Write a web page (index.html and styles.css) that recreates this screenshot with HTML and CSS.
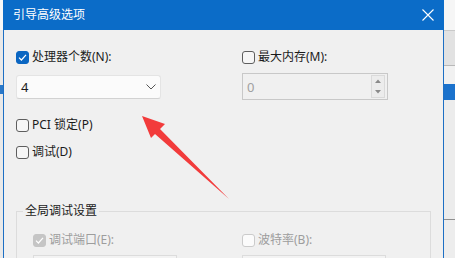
FILE: index.html
```html
<!DOCTYPE html>
<html lang="zh-CN">
<head>
    <meta charset="UTF-8">
    <title>引导高级选项</title>
    <link rel="stylesheet" href="styles.css">
</head>
<body>
    <div class="desk desk-left">
        <div class="desk-top"></div>
        <span class="chev"></span>
    </div>

    <div class="dialog">
        <div class="titlebar">
            <span class="title">引导高级选项</span>
            <svg class="close" width="12" height="12" viewBox="0 0 12 12">
                <path d="M0.5 0.5 L11.5 11.5 M11.5 0.5 L0.5 11.5" stroke="#fff" stroke-width="1.1" fill="none"/>
            </svg>
        </div>

        <div class="content">
            <div class="grid">
                <div class="col">
                    <label class="check">
                        <span class="box checked">
                            <svg width="9" height="9" viewBox="0 0 9 9"><path d="M1 4.6 L3.4 7 L8 1.8" stroke="#fff" stroke-width="1.2" fill="none"/></svg>
                        </span>
                        处理器个数(N):
                    </label>
                    <div class="select">
                        <span>4</span>
                        <svg width="10" height="6" viewBox="0 0 10 6"><path d="M0.5 0.5 L5 5 L9.5 0.5" stroke="#555" stroke-width="1" fill="none"/></svg>
                    </div>
                </div>
                <div class="col">
                    <label class="check">
                        <span class="box"></span>
                        最大内存(M):
                    </label>
                    <div class="spin">
                        <span>0</span>
                        <div class="spin-btns">
                            <svg width="6" height="4" viewBox="0 0 6 4"><path d="M0 4 L3 0.5 L6 4 Z" fill="#8a8a8a"/></svg>
                            <svg width="6" height="4" viewBox="0 0 6 4"><path d="M0 0 L3 3.5 L6 0 Z" fill="#8a8a8a"/></svg>
                        </div>
                    </div>
                </div>
            </div>

            <label class="check pci">
                <span class="box"></span>
                PCI 锁定(P)
            </label>
            <label class="check debug">
                <span class="box"></span>
                调试(D)
            </label>

            <fieldset class="group">
                <legend>全局调试设置</legend>
                <div class="group-grid">
                    <div class="col">
                        <label class="check disabled">
                            <span class="box checked">
                                <svg width="9" height="9" viewBox="0 0 9 9"><path d="M1 4.6 L3.4 7 L8 1.8" stroke="#fff" stroke-width="1.2" fill="none"/></svg>
                            </span>
                            调试端口(E):
                        </label>
                        <div class="field"></div>
                    </div>
                    <div class="col">
                        <label class="check disabled">
                            <span class="box"></span>
                            波特率(B):
                        </label>
                        <div class="field"></div>
                    </div>
                </div>
            </fieldset>
        </div>
    </div>

    <div class="desk desk-right">
        <div class="strip s1"></div>
        <div class="strip s2"></div>
        <div class="strip s3"></div>
        <div class="strip s4"></div>
        <div class="strip s5"></div>
    </div>

    <!-- red pointer drawn over the dialog -->
    <svg class="arrow" width="100" height="100" viewBox="135 110 100 100">
        <polygon points="142,116 165,124 160,129 229,199 155,134 151,138" fill="#f23b3b"/>
    </svg>
</body>
</html>
```

FILE: styles.css
```css
* {
    margin: 0;
    padding: 0;
    box-sizing: border-box;
}

body {
    width: 455px;
    height: 258px;
    overflow: hidden;
    display: flex;
    font-family: "Noto Sans", "Noto Sans CJK SC", sans-serif;
    font-size: 12px;
    color: #1b1b1b;
    background: #ececec;
}

/* background window peeking out on both sides */
.desk {
    height: 258px;
    flex-shrink: 0;
}

.desk-left {
    width: 3px;
    background: #e9e9e9;
    display: flex;
    flex-direction: column;
}

.desk-top {
    height: 30px;
    background: #f8f8f8;
}

.chev {
    display: block;
    width: 3px;
    height: 9px;
    margin-top: 55px;
    background: #2a78c8;
}

.desk-right {
    width: 11px;
    display: flex;
    flex-direction: column;
    background: #ededed;
}

.strip.s1 { height: 31px; background: #f6f6f6; border-bottom: 1px solid #c9c9c9; }
.strip.s2 { height: 35px; background: #e2e2e2; border-bottom: 1px solid #b8b8b8; }
.strip.s3 { height: 18px; background: #f1f1f1; }
.strip.s4 { height: 16px; background: #1b72cc; }
.strip.s5 { height: 120px; background: #ececec; border-bottom: 1px solid #8f8f8f; }

/* dialog */
.dialog {
    width: 441px;
    flex-shrink: 0;
    background: #f0f0f0;
    border-left: 1px solid #1d6fc4;
    border-right: 1px solid #1d6fc4;
}

.titlebar {
    height: 30px;
    margin: 0 -1px;
    background: #0b6cc8;
    display: flex;
    align-items: center;
    justify-content: space-between;
    padding: 0 10px 0 10px;
}

.title {
    color: #fff;
    font-size: 12px;
    line-height: 14px;
}

.close {
    display: block;
    margin-right: 0;
}

.content {
    padding: 20px 0 0 12px;
}

.grid {
    display: grid;
    grid-template-columns: 226px 1fr;
}

.col {
    display: flex;
    flex-direction: column;
    align-items: flex-start;
}

.check {
    display: flex;
    align-items: center;
    gap: 3px;
    height: 14px;
    line-height: 14px;
    white-space: nowrap;
}

.box {
    width: 13px;
    height: 13px;
    border: 1px solid #5e5e5e;
    border-radius: 3px;
    background: #f6f6f6;
    display: flex;
    align-items: center;
    justify-content: center;
    flex-shrink: 0;
}

.box.checked {
    background: #0b66c2;
    border-color: #0b66c2;
}

.box svg {
    display: block;
}

.check.disabled {
    color: #9d9d9d;
}

.check.disabled .box {
    border-color: #cbcbcb;
    background: #fbfbfb;
}

.check.disabled .box.checked {
    background: #c5c5c5;
    border-color: #c5c5c5;
}

.select {
    margin-top: 11px;
    width: 145px;
    height: 24px;
    background: #fbfbfb;
    border: 1px solid #e4e4e4;
    border-bottom-color: #d2d2d2;
    border-radius: 3px;
    display: flex;
    align-items: center;
    justify-content: space-between;
    padding: 0 4px 0 4px;
    font-size: 13px;
}

.spin {
    margin-top: 9px;
    width: 146px;
    height: 27px;
    border: 1px solid #c8c8c8;
    background: #f0f0f0;
    display: flex;
    align-items: center;
    justify-content: space-between;
    padding: 0 2px 0 4px;
    color: #a0a0a0;
    font-size: 13px;
}

.spin-btns {
    width: 14px;
    height: 23px;
    border: 1px solid #dadada;
    background: #ececec;
    display: flex;
    flex-direction: column;
    align-items: center;
    justify-content: space-around;
}

.spin-btns svg {
    display: block;
}

.pci {
    margin-top: 18px;
}

.debug {
    margin-top: 13px;
}

.group {
    margin-top: 44px;
    width: 415px;
    border: 1px solid #dcdcdc;
    padding: 0 0 0 6px;
}

.group legend {
    padding: 0 2px;
    line-height: 16px;
    font-size: 12px;
}

.group-grid {
    display: grid;
    grid-template-columns: 209px 1fr;
    padding: 14px 0 0 10px;
}

.field {
    margin-top: 8px;
    width: 144px;
    height: 24px;
    border: 1px solid #dcdcdc;
    background: #f3f3f3;
}

/* overlay pointer */
.arrow {
    position: absolute;
    left: 135px;
    top: 110px;
}
```
